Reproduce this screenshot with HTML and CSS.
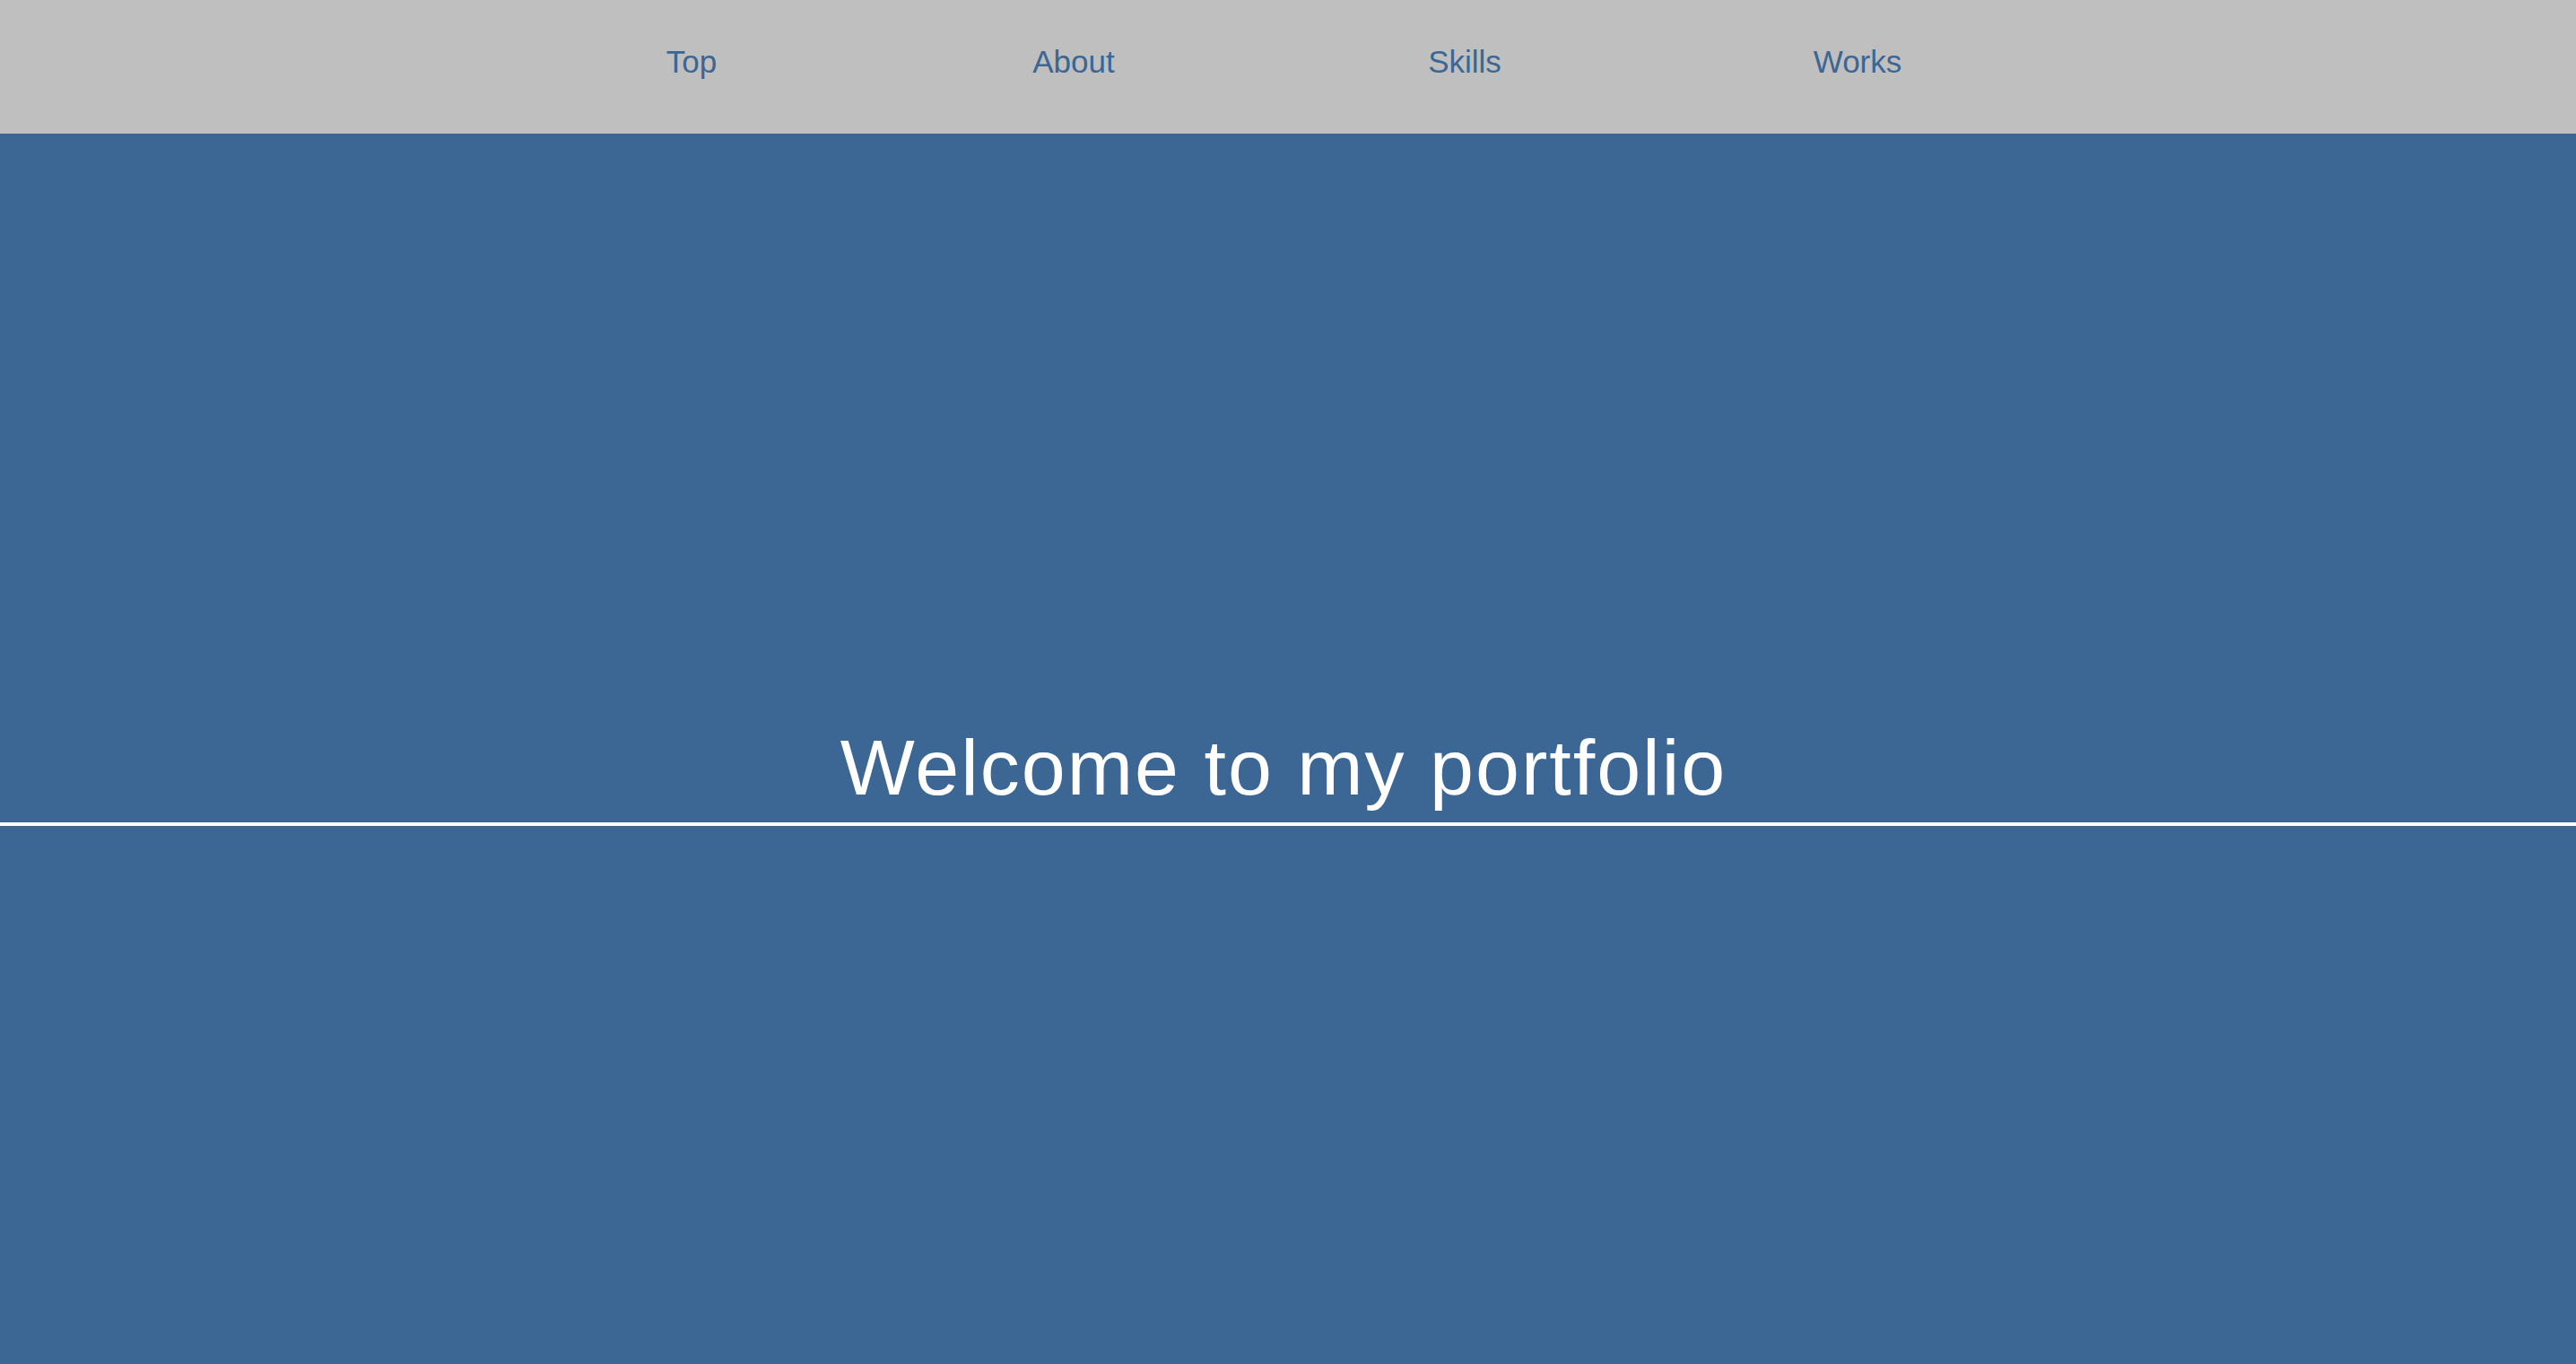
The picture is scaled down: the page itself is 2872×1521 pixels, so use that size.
FILE: index.html
```html
<!DOCTYPE html>
<html lang="en">
<head>
<meta charset="utf-8">
<title>Portfolio</title>
<link rel="stylesheet" href="styles.css">
</head>
<body>
<header class="site-header">
  <nav class="nav">
    <a class="nav-link" href="#top">Top</a>
    <a class="nav-link" href="#about">About</a>
    <a class="nav-link" href="#skills">Skills</a>
    <a class="nav-link" href="#works">Works</a>
  </nav>
</header>
<main class="hero">
  <h1 class="hero-title">Welcome to my portfolio</h1>
</main>
</body>
</html>
```
FILE: styles.css
```css
html, body {
  margin: 0;
  padding: 0;
}
body {
  background: #3c6693;
  font-family: "Liberation Sans", Arial, sans-serif;
  min-height: 1521px;
}
.site-header {
  background: #bfbfbf;
  height: 149px;
  box-sizing: border-box;
  padding-top: 48px;
}
.nav {
  display: grid;
  grid-template-columns: 426px 426px 446px 430px;
  justify-content: center;
  padding-right: 28px;
}
.nav-link {
  text-align: center;
  color: #3c6693;
  text-decoration: none;
  font-size: 35px;
  line-height: 42px;
}
.hero {
  display: block;
}
.hero-title {
  margin: 657px 0 0;
  padding: 0 10px 11px 0;
  border-bottom: 4px solid #ffffff;
  color: #ffffff;
  font-weight: normal;
  font-size: 88px;
  line-height: 100px;
  letter-spacing: 2px;
  text-align: center;
}
```
